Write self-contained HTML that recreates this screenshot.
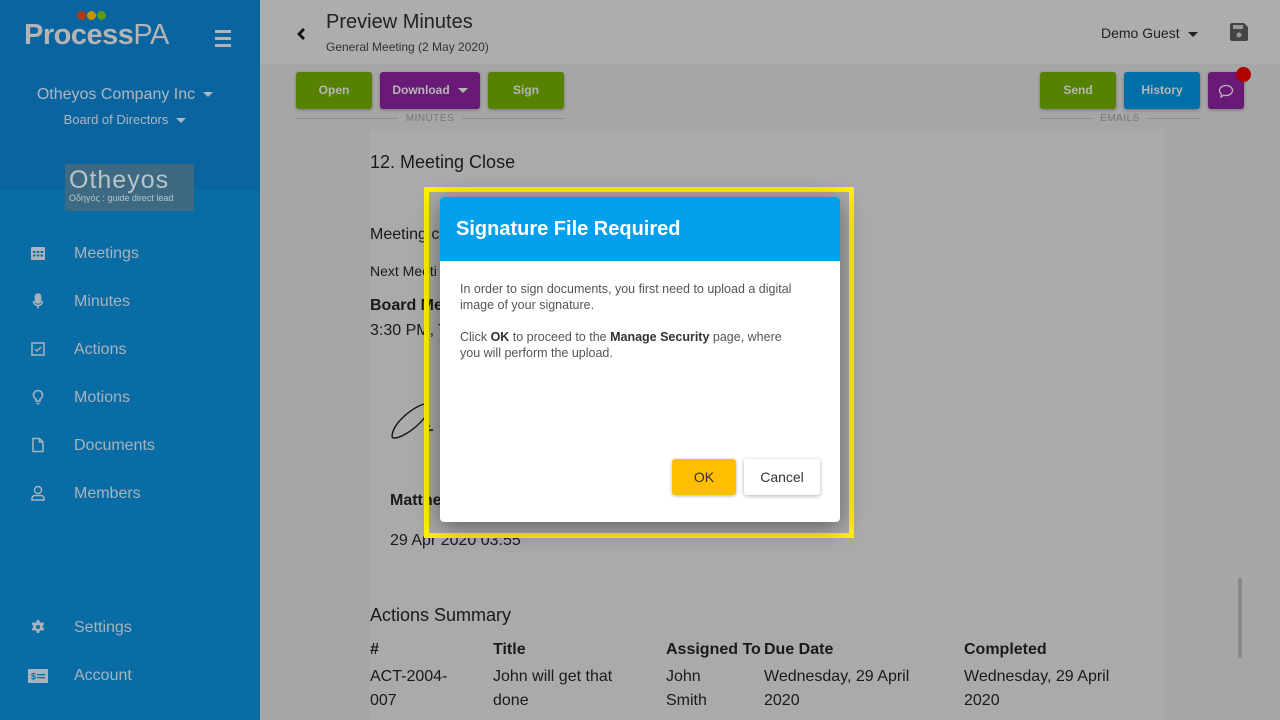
<!DOCTYPE html>
<html><head><meta charset="utf-8"><style>
*{margin:0;padding:0;box-sizing:border-box}
body{width:1280px;height:720px;overflow:hidden;position:relative;font-family:"Liberation Sans",sans-serif;background:#a6a6a6}
.sb{position:absolute;left:0;top:0;width:260px;height:720px;background:#0a6ca5}
.sbtop{position:absolute;left:0;top:0;width:260px;height:190px;background:#0a64a0}
.logo{position:absolute;left:24px;top:19px;font-size:29px;font-weight:bold;color:#b4b4b4;letter-spacing:-0.5px}
.logo span{font-weight:normal;color:#b4b4b4}
.dots{position:absolute;left:77px;top:11px;line-height:0}
.dots i{display:inline-block;width:9px;height:9px;border-radius:50%;margin-right:1px}
.ham{position:absolute;left:215px;top:30px;width:16px}
.ham b{display:block;height:2.5px;background:#b4b4b4;margin-bottom:4.5px}
.co{position:absolute;left:0;width:250px;text-align:center;color:#b0b8bf}
.tri{display:inline-block;border-left:5px solid transparent;border-right:5px solid transparent;border-top:5px solid #b0b8bf;vertical-align:middle;margin-left:8px}
.oth{position:absolute;left:65px;top:164px;width:129px;height:47px;background:#3d6a82;color:#b8c4c8}
.nav{position:absolute;left:0;width:260px;height:24px;color:#a8b3bc;font-size:16px}
.nav svg{position:absolute;left:30px;top:3px}
.nav span{position:absolute;left:74px;top:3px}
.hdr{position:absolute;left:260px;top:0;width:1020px;height:64px;background:#adadad}
.btn{position:absolute;top:72px;height:37px;border-radius:3px;color:#b6b6b6;font-size:12px;font-weight:bold;text-align:center;line-height:37px;box-shadow:0 1px 3px rgba(0,0,0,.3)}
.g{background:#578100}.p{background:#691a77}.b{background:#0270a8}
.lbl{position:absolute;top:113px;font-size:10px;color:#777;text-align:center;letter-spacing:0.5px}
.ln{position:absolute;top:118px;height:1px;background:#8c8c8c}
.paper{position:absolute;left:370px;top:130px;width:795px;height:590px;background:#aaaaaa}
.t{position:absolute;color:#1a1a1a;font-size:16px}
.modal{position:absolute;left:440px;top:197px;width:400px;height:325px;background:#fff;border-radius:4px;box-shadow:0 5px 25px rgba(0,0,0,.45);overflow:hidden}
.mh{height:64px;background:#03a0ee;color:#fff;font-size:20px;font-weight:bold;padding:21px 16px}
.mb{padding:20px 40px 20px 20px;font-size:12.5px;color:#555;line-height:16px}
.mb b{color:#333}
.yl{position:absolute;left:424px;top:187px;width:430px;height:351px;border:5px solid #fff200}
</style></head><body>
<div class="sb"></div><div class="sbtop"></div>
<div class="logo">Process<span>PA</span></div>
<div class="dots"><i style="background:#b23a12"></i><i style="background:#c99300"></i><i style="background:#5a9a12"></i></div>
<div class="ham"><b></b><b></b><b></b></div>
<div class="co" style="top:86px;font-size:16px">Otheyos Company Inc<i class="tri"></i></div>
<div class="co" style="top:112px;font-size:13px">Board of Directors<i class="tri"></i></div>
<div class="oth"><div style="font-size:25px;padding:2px 0 0 4px;letter-spacing:1px">Otheyos</div><div style="font-size:9px;padding-left:4px;margin-top:-2px">Οδηγός : guide direct lead</div></div>
<div class="nav" style="top:242px"><svg width="16" height="16" viewBox="0 0 16 16" fill="#a8b3bc"><rect x="1" y="2" width="14" height="13" rx="1"/><g fill="#0a6ca5"><rect x="3" y="6" width="2.5" height="2"/><rect x="6.8" y="6" width="2.5" height="2"/><rect x="10.6" y="6" width="2.5" height="2"/><rect x="3" y="9.5" width="2.5" height="2"/><rect x="6.8" y="9.5" width="2.5" height="2"/><rect x="10.6" y="9.5" width="2.5" height="2"/></g></svg><span>Meetings</span></div>
<div class="nav" style="top:290px"><svg width="16" height="16" viewBox="0 0 16 16" fill="none" stroke="#a8b3bc" stroke-width="1.6"><rect x="5.5" y="1" width="5" height="9" rx="2.5" fill="#a8b3bc"/><path d="M3.5 8a4.5 4.5 0 0 0 9 0M8 12.5v3"/></svg><span>Minutes</span></div>
<div class="nav" style="top:338px"><svg width="16" height="16" viewBox="0 0 16 16" fill="none" stroke="#a8b3bc" stroke-width="1.5"><rect x="2" y="2" width="12" height="12"/><path d="M5 8l2 2 4-4"/></svg><span>Actions</span></div>
<div class="nav" style="top:386px"><svg width="16" height="16" viewBox="0 0 16 16" fill="none" stroke="#a8b3bc" stroke-width="1.5"><path d="M6 12V10C4 9 3.5 7.5 3.5 6a4.5 4.5 0 0 1 9 0c0 1.5-.5 3-2.5 4v2zM6.5 14.5h3"/></svg><span>Motions</span></div>
<div class="nav" style="top:434px"><svg width="16" height="16" viewBox="0 0 16 16" fill="none" stroke="#a8b3bc" stroke-width="1.5"><path d="M3 1.5h6.5l3.5 3.5v9.5H3zM9.5 1.5V5H13"/></svg><span>Documents</span></div>
<div class="nav" style="top:482px"><svg width="16" height="16" viewBox="0 0 16 16" fill="none" stroke="#a8b3bc" stroke-width="1.5"><circle cx="8" cy="5" r="3.5"/><path d="M2 15v-1.5a3 3 0 0 1 3-3h6a3 3 0 0 1 3 3V15z"/></svg><span>Members</span></div>
<div class="nav" style="top:616px"><svg width="16" height="16" viewBox="0 0 16 16"><path d="M6.8 1h2.4l.4 2 1.6.9 1.9-.7 1.2 2.1-1.5 1.3v1.8l1.5 1.3-1.2 2.1-1.9-.7-1.6.9-.4 2H6.8l-.4-2-1.6-.9-1.9.7-1.2-2.1 1.5-1.3V6.6L1.7 5.3l1.2-2.1 1.9.7 1.6-.9z" fill="#a8b3bc"/><circle cx="8" cy="8" r="2" fill="#0a6ca5"/></svg><span>Settings</span></div>
<div class="nav" style="top:664px"><svg width="20" height="14" viewBox="0 0 20 14" style="left:28px;top:5px"><rect width="20" height="14" fill="#a8b3bc"/><text x="3" y="10.5" font-size="9" fill="#0a6ca5" font-family="Liberation Sans" font-weight="bold">$</text><rect x="9" y="5" width="8" height="1.3" fill="#0a6ca5"/><rect x="9" y="8" width="8" height="1.3" fill="#0a6ca5"/></svg><span>Account</span></div>

<div class="hdr"></div>
<svg style="position:absolute;left:296px;top:27px" width="10" height="14" viewBox="0 0 10 14"><path d="M8 2L3 7l5 5" fill="none" stroke="#111" stroke-width="2.8"/></svg>
<div style="position:absolute;left:326px;top:11px;font-size:20px;color:#222">Preview Minutes</div>
<div style="position:absolute;left:326px;top:40px;font-size:12px;color:#333">General Meeting (2 May 2020)</div>
<div style="position:absolute;left:1101px;top:25px;font-size:14px;color:#222">Demo Guest<i class="tri" style="border-top-color:#222"></i></div>
<svg style="position:absolute;left:1230px;top:23px" width="18" height="18" viewBox="0 0 18 18"><path d="M0 2a2 2 0 0 1 2-2h12l4 4v12a2 2 0 0 1-2 2H2a2 2 0 0 1-2-2z" fill="#444"/><rect x="3" y="2" width="10" height="4" fill="#999"/><circle cx="9" cy="12" r="2.5" fill="#999"/></svg>

<div class="btn g" style="left:296px;width:76px">Open</div>
<div class="btn p" style="left:380px;width:100px">Download<i class="tri" style="border-top-color:#b6b6b6"></i></div>
<div class="btn g" style="left:488px;width:76px">Sign</div>
<div class="ln" style="left:296px;width:102px"></div><div class="lbl" style="left:398px;width:64px">MINUTES</div><div class="ln" style="left:462px;width:102px"></div>
<div class="btn g" style="left:1040px;width:76px">Send</div>
<div class="btn b" style="left:1124px;width:76px">History</div>
<div class="btn p" style="left:1208px;width:36px"><svg width="16" height="14" viewBox="0 0 16 14" style="margin-top:12px"><path d="M8 1.5c3.6 0 6.5 2.2 6.5 5s-2.9 5-6.5 5c-.8 0-1.6-.1-2.3-.3L3 13l.4-2.9C2.2 9.2 1.5 7.9 1.5 6.5c0-2.8 2.9-5 6.5-5z" fill="none" stroke="#b6b6b6" stroke-width="1.3"/></svg></div>
<div style="position:absolute;left:1236px;top:67px;width:15px;height:15px;border-radius:50%;background:#b00000"></div>
<div class="ln" style="left:1040px;width:52px"></div><div class="lbl" style="left:1092px;width:56px">EMAILS</div><div class="ln" style="left:1148px;width:52px"></div>

<div class="paper"></div>
<div class="t" style="left:370px;top:152px;font-size:18px">12. Meeting Close</div>
<div class="t" style="left:370px;top:226px">Meeting c</div>
<div class="t" style="left:370px;top:263px;font-size:14px">Next Meeti</div>
<div class="t" style="left:370px;top:297px;font-weight:bold">Board Me</div>
<div class="t" style="left:370px;top:322px">3:30 PM, T</div>
<svg style="position:absolute;left:388px;top:398px" width="60" height="50" viewBox="0 0 60 50"><path d="M40 5C25 8 5 25 4 38c0 6 20-2 34-20M40 20c-4 2-4 8 2 8M45 32c-8 0-10 5-4 6" fill="none" stroke="#111" stroke-width="1.4"/></svg>
<div class="t" style="left:390px;top:492px;font-weight:bold">Matthe</div>
<div class="t" style="left:390px;top:532px">29 Apr 2020 03:55</div>
<div class="t" style="left:370px;top:605px;font-size:18px">Actions Summary</div>
<div class="t" style="left:370px;top:641px;font-weight:bold">#</div>
<div class="t" style="left:493px;top:641px;font-weight:bold">Title</div>
<div class="t" style="left:666px;top:641px;font-weight:bold">Assigned To</div>
<div class="t" style="left:764px;top:641px;font-weight:bold">Due Date</div>
<div class="t" style="left:964px;top:641px;font-weight:bold">Completed</div>
<div class="t" style="left:370px;top:665px;line-height:24px">ACT-2004-<br>007</div>
<div class="t" style="left:493px;top:665px;line-height:24px">John will get that<br>done</div>
<div class="t" style="left:666px;top:665px;line-height:24px">John<br>Smith</div>
<div class="t" style="left:764px;top:665px;line-height:24px">Wednesday, 29 April<br>2020</div>
<div class="t" style="left:964px;top:665px;line-height:24px">Wednesday, 29 April<br>2020</div>
<div style="position:absolute;left:1238px;top:578px;width:4px;height:80px;background:#888;border-radius:2px"></div>

<div class="yl"></div>
<div class="modal">
<div class="mh">Signature File Required</div>
<div class="mb">In order to sign documents, you first need to upload a digital image of your signature.<br><br>Click <b>OK</b> to proceed to the <b>Manage Security</b> page, where you will perform the upload.</div>
<div style="position:absolute;left:232px;top:262px;width:64px;height:36px;background:#ffbe00;border-radius:3px;text-align:center;line-height:36px;font-size:14px;color:#333;box-shadow:0 1px 3px rgba(0,0,0,.3)">OK</div>
<div style="position:absolute;left:304px;top:262px;width:76px;height:36px;background:#fff;border-radius:3px;text-align:center;line-height:36px;font-size:14px;color:#333;box-shadow:0 1px 4px rgba(0,0,0,.3)">Cancel</div>
</div>
</body></html>
